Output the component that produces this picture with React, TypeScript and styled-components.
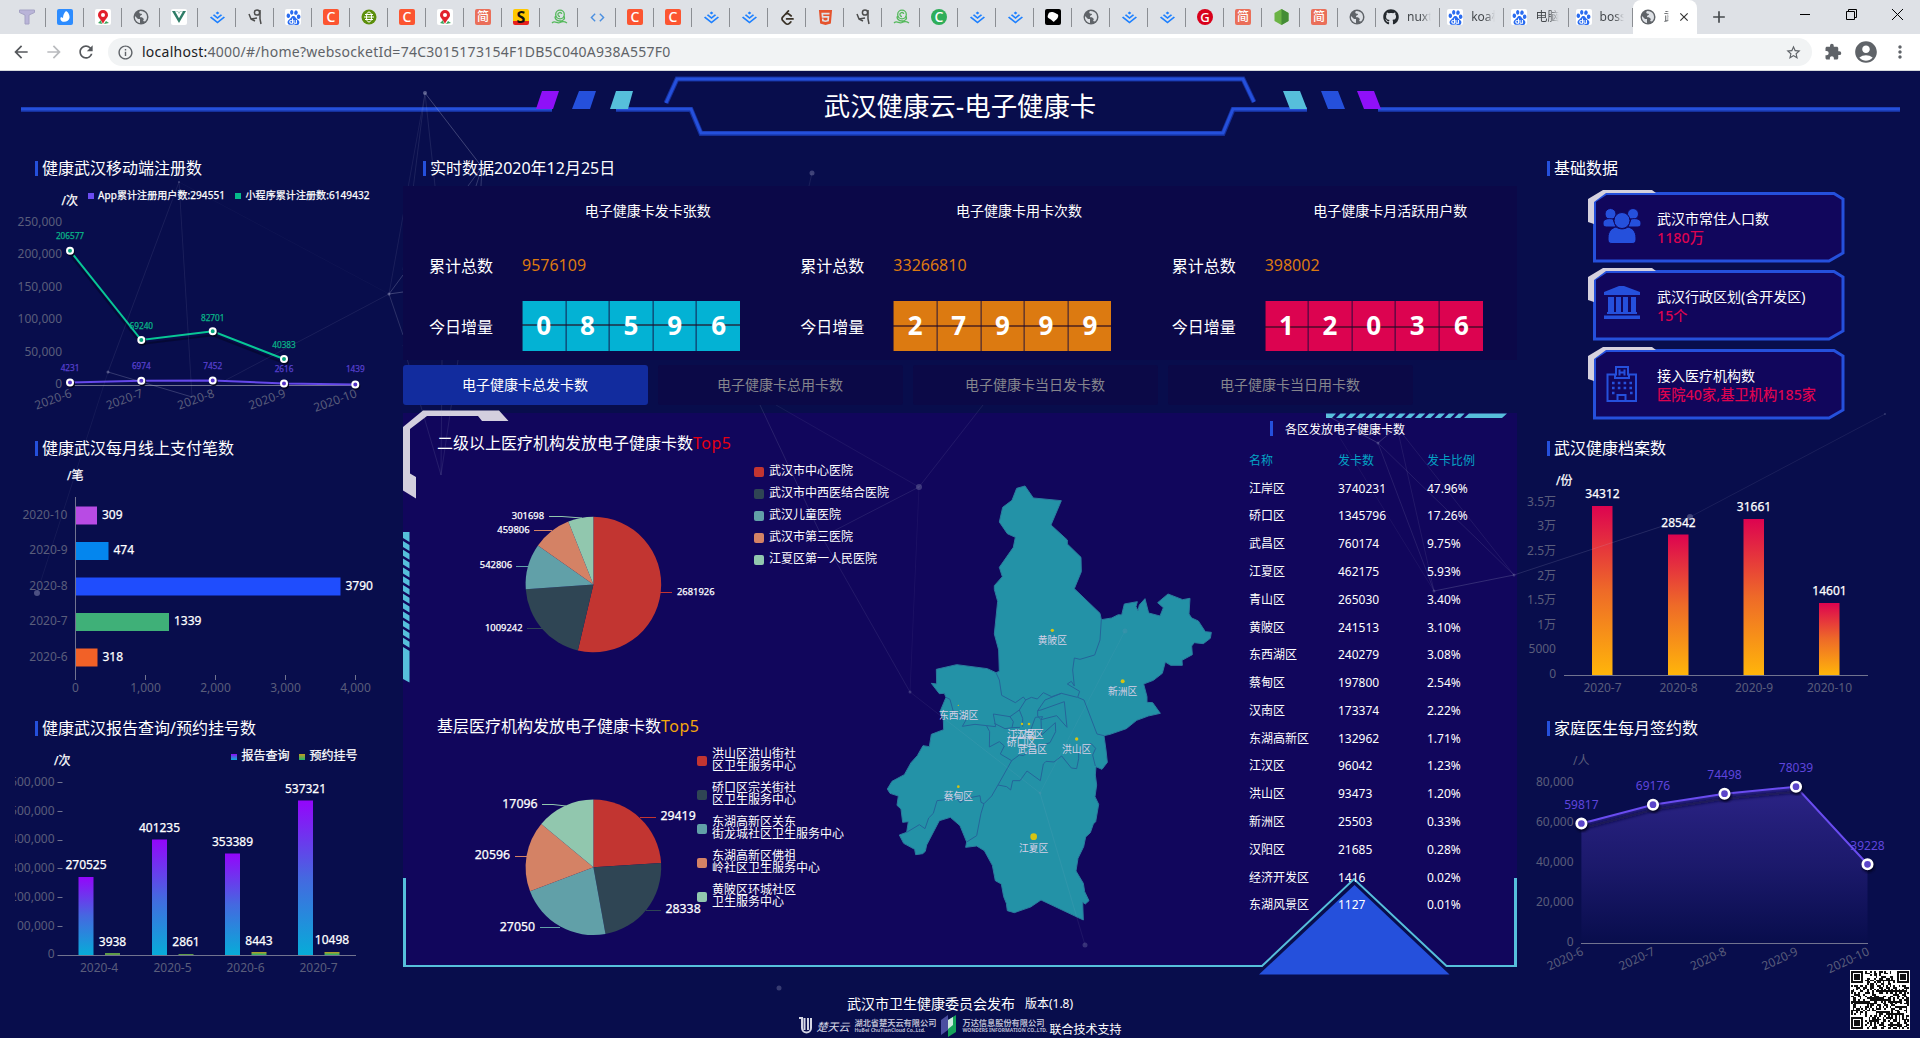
import React from "react";
import styled, { createGlobalStyle } from "styled-components";
import { SiBaidu, SiJuejin, SiLeetcode, SiVuedotjs, SiHtml5 } from "react-icons/si";
import { FaGithub } from "react-icons/fa";
import {
  MdArrowBack,
  MdArrowForward,
  MdRefresh,
  MdInfoOutline,
  MdStarBorder,
  MdExtension,
  MdAccountCircle,
  MdMoreVert,
  MdAdd,
  MdClose,
  MdCode,
} from "react-icons/md";

const FONT = `"Noto Sans", "Noto Sans CJK SC", sans-serif`;
const BG = "#080d4c";
const BLUE = "#2550dc";
const CYAN = "#56bfdb";
const DIM = "#5a5d7b";
const PINK = "#dc0350";

const Global = createGlobalStyle`
  * { box-sizing: border-box; }
  body { margin: 0; background: ${BG}; font-family: ${FONT}; color: #fff; overflow: hidden; }
  svg { display: block; }
`;

const Window = styled.div`
  width: 1920px;
  height: 1038px;
  display: flex;
  flex-direction: column;
  overflow: hidden;
`;

/* ---------- browser chrome ---------- */

const TabStrip = styled.div`
  height: 34px;
  flex: none;
  display: flex;
  align-items: stretch;
  padding-left: 8px;
  background: #dee1e6;
  color: #45494d;
`;

const Tab = styled.div<{ $wide?: boolean; $active?: boolean }>`
  width: ${(p) => (p.$wide ? 64.2 : 38)}px;
  flex: none;
  display: flex;
  align-items: center;
  justify-content: ${(p) => (p.$wide ? "flex-start" : "center")};
  padding-left: ${(p) => (p.$wide ? 7 : 0)}px;
  background-color: ${(p) => (p.$active ? "#fff" : "transparent")};
  background-image: ${(p) => (p.$active ? "none" : "linear-gradient(#8b8e93, #8b8e93)")};
  background-repeat: no-repeat;
  background-size: 1px 19px;
  background-position: right 8px;
  border-radius: ${(p) => (p.$active ? "8px 8px 0 0" : "0")};
  gap: 8px;
`;

const TabLabel = styled.span<{ $w: number }>`
  width: ${(p) => p.$w}px;
  overflow: hidden;
  white-space: nowrap;
  font-size: 12px;
  line-height: 18px;
  mask-image: linear-gradient(90deg, #000 60%, transparent);
`;

const Badge = styled.span<{ $bg: string; $fg?: string; $round?: boolean; $size?: number }>`
  width: 16px;
  height: 16px;
  display: grid;
  place-items: center;
  border-radius: ${(p) => (p.$round ? "50%" : "2px")};
  background: ${(p) => p.$bg};
  color: ${(p) => p.$fg || "#fff"};
  font-size: ${(p) => p.$size || 14}px;
  line-height: 16px;
  font-weight: 500;
`;

const NewTab = styled.div`
  width: 44px;
  display: grid;
  place-items: center;
`;

const WinControls = styled.div`
  margin-left: auto;
  display: flex;
  color: #111;
`;

const WinButton = styled.div`
  width: 46px;
  height: 28px;
  display: grid;
  place-items: center;
`;

const Toolbar = styled.div`
  height: 37px;
  flex: none;
  display: flex;
  align-items: center;
  padding: 0 11px;
  background: #fff;
  border-bottom: 1px solid #d5d8dc;
  color: #5f6368;
`;

const NavIcon = styled.span<{ $w: number; $faded?: boolean }>`
  width: ${(p) => p.$w}px;
  display: flex;
  color: ${(p) => (p.$faded ? "#b9bbbe" : "#55585c")};
`;

const Omnibox = styled.div`
  flex: none;
  width: 1704px;
  height: 28px;
  display: flex;
  align-items: center;
  padding: 0 10px 0 9px;
  border-radius: 14px;
  background: #f1f3f4;
`;

const Url = styled.span`
  flex: 1;
  margin-left: 8px;
  font-size: 14px;
  line-height: 20px;
  letter-spacing: 0.26px;
  b {
    font-weight: 400;
    color: #202124;
  }
`;

const Tools = styled.div`
  flex: 1;
  display: flex;
  align-items: center;
  justify-content: space-between;
  padding-left: 12px;
  margin-right: -1px;
`;

/* ---------- dashboard ---------- */

const Dashboard = styled.div`
  position: relative;
  flex: 1;
  display: flex;
  flex-direction: column;
  background: ${BG};
`;

const Backdrop = styled.svg`
  position: absolute;
  left: 0;
  top: 0;
  z-index: 1;
  pointer-events: none;
`;

const Header = styled.header`
  position: relative;
  height: 70px;
  flex: none;
  display: flex;
  justify-content: center;
`;

const HeaderArt = styled.svg`
  position: absolute;
  left: 0;
  top: 0;
`;

const HeaderTitle = styled.h1`
  position: relative;
  margin: 0;
  font-size: 26.4px;
  line-height: 71px;
  font-weight: 400;
`;

const Main = styled.main`
  height: 841px;
  flex: none;
  display: grid;
  grid-template-columns: 403px 1114px 403px;
`;

const Column = styled.div`
  display: flex;
  flex-direction: column;
  min-width: 0;
`;

const Section = styled.section`
  height: 280px;
  flex: none;
  display: flex;
  flex-direction: column;
`;

const SectionTitle = styled.h2<{ $left: number; $h?: number }>`
  height: ${(p) => p.$h || 42}px;
  flex: none;
  margin: 0;
  padding: 20px 0 0 ${(p) => p.$left}px;
  display: flex;
  gap: 4px;
  font-size: 16px;
  line-height: 14px;
  font-weight: 400;
  white-space: nowrap;
  &::before {
    content: "";
    width: 3px;
    height: 15px;
    background: ${BLUE};
  }
`;

const Chart = styled.svg`
  flex: none;
  overflow: visible;
  font-family: ${FONT};
`;

const Label = styled.text<{ $c?: string; $s?: number; $heavy?: boolean }>`
  font-size: ${(p) => p.$s || 12}px;
  fill: ${(p) => p.$c || DIM};
  stroke: ${(p) => (p.$heavy ? p.$c || "#fff" : "none")};
  stroke-width: 0.25px;
`;

const StatsPanel = styled.div`
  position: relative;
  z-index: 2;
  height: 174px;
  flex: none;
  display: grid;
  grid-template-columns: repeat(3, 1fr);
  background: #0b0848;
`;

const Stat = styled.div`
  display: grid;
  grid-template-columns: 93px 1fr;
  grid-template-rows: 49px 59px 64px;
  align-items: center;
  padding-left: 26px;
  font-size: 16px;
`;

const StatTitle = styled.div`
  grid-column: 1 / 3;
  padding-left: 92px;
  text-align: center;
  font-size: 14px;
  line-height: 20px;
`;

const StatValue = styled.div`
  color: #dd7a10;
`;

const Digits = styled.div<{ $bg: string; $line: number }>`
  width: 218px;
  height: 50px;
  display: grid;
  grid-template-columns: repeat(5, 1fr);
  background: linear-gradient(rgba(40, 10, 30, 0.6), rgba(40, 10, 30, 0.6)) 0 ${(p) => p.$line}px / 100% 2px no-repeat,
    ${(p) => p.$bg};
  font-size: 26px;
  font-weight: 700;
  line-height: 48px;
  text-align: center;
`;

const Digit = styled.span`
  border-left: 1px solid rgba(20, 10, 60, 0.55);
  &:not(:last-child) {
    border-right: 1px solid rgba(20, 10, 60, 0.35);
  }
`;

const Switcher = styled.div`
  position: relative;
  z-index: 2;
  flex: none;
  height: 40px;
  margin: 5px 0 8px;
  display: flex;
  gap: 10px;
`;

const SwitchButton = styled.button<{ $active?: boolean }>`
  width: 245px;
  height: 40px;
  padding: 0 1px 0 0;
  border: 0;
  border-radius: 3px;
  font: 14px/40px ${FONT};
  color: ${(p) => (p.$active ? "#fff" : "#85858c")};
  background: ${(p) => (p.$active ? "#122c9e" : "#0b0947")};
`;

const Panel = styled.div`
  position: relative;
  flex: none;
  height: 553px;
  display: grid;
  grid-template-columns: 490px 347px 277px;
  background: #11065c;
`;

const PanelArt = styled.svg`
  position: absolute;
  left: 0;
  top: 0;
  overflow: visible;
`;

const PieColumn = styled.div`
  position: relative;
  display: grid;
  grid-template-rows: 283px 270px;
`;

const PieBlock = styled.div`
  padding-top: 20px;
`;

const PieTitle = styled.h3<{ $accent: string }>`
  margin: 0 0 1px;
  padding-left: 34px;
  font-size: 16px;
  line-height: 20px;
  font-weight: 400;
  em {
    font-style: normal;
    letter-spacing: 0.5px;
    color: ${(p) => p.$accent};
  }
`;

const PieRow = styled.div`
  display: flex;
`;

const Legend = styled.ul`
  list-style: none;
  margin: 0;
  padding: 6px 0 0;
`;

const LegendItem = styled.li<{ $h: number; $c: string }>`
  height: ${(p) => p.$h}px;
  display: flex;
  align-items: center;
  gap: 5px;
  font-size: 12px;
  line-height: 12px;
  white-space: pre;
  &::before {
    content: "";
    width: 10px;
    height: 10px;
    margin-top: 1px;
    border-radius: 2px;
    background: ${(p) => p.$c};
  }
`;

const MapColumn = styled.div`
  position: relative;
`;

const TableColumn = styled.div`
  position: relative;
  padding-left: 9px;
`;

const TableTitle = styled.h3`
  margin: 0;
  height: 34px;
  padding: 8px 0 0 21px;
  display: flex;
  gap: 12px;
  font-size: 12px;
  line-height: 17px;
  font-weight: 400;
  &::before {
    content: "";
    width: 3px;
    height: 15px;
    background: ${BLUE};
  }
`;

const TableRow = styled.div<{ $head?: boolean }>`
  height: 27.79px;
  display: grid;
  grid-template-columns: 89px 89px 1fr;
  align-items: center;
  font-size: 12px;
  line-height: 18px;
  color: ${(p) => (p.$head ? "#04a3c4" : "#fff")};
`;

const CardList = styled.div`
  display: flex;
  flex-direction: column;
  padding: 6px 0 0 70px;
`;

const Card = styled.div`
  position: relative;
  width: 258px;
  height: 78.3px;
  display: grid;
  grid-template-columns: 70px 1fr;
`;

const CardFrame = styled.svg`
  position: absolute;
  left: 0;
  top: 0;
  overflow: visible;
`;

const CardIcon = styled.div`
  position: relative;
  padding: 19px 0 0 16px;
`;

const CardText = styled.div`
  position: relative;
  padding-top: 20px;
  font-size: 14px;
  line-height: 19px;
  white-space: nowrap;
  strong {
    display: block;
    font-size: 14.3px;
    font-weight: 500;
    color: ${PINK};
  }
`;

const Footer = styled.footer`
  position: relative;
  flex: 1;
  display: flex;
  flex-direction: column;
  align-items: center;
  padding-top: 13px;
`;

const Publisher = styled.div`
  display: flex;
  align-items: center;
  gap: 10px;
  font-size: 14px;
  line-height: 18px;
  small {
    font-size: 12px;
  }
`;

const Partners = styled.div`
  display: flex;
  align-items: center;
  height: 25px;
  font-size: 12px;
`;

const Company = styled.div<{ $w: number }>`
  width: ${(p) => p.$w}px;
  font-size: 8.2px;
  line-height: 9px;
  font-weight: 700;
  color: #b9bbd0;
  white-space: nowrap;
  small {
    display: block;
    font-size: 5px;
    line-height: 6px;
  }
`;

const Script = styled.span`
  width: 38px;
  font: italic 11px/16px "Noto Sans CJK SC", sans-serif;
  color: #d5d6e4;
`;

const Support = styled.span`
  padding-top: 8px;
  line-height: 16px;
`;

const QrCode = styled.svg`
  position: absolute;
  right: 10px;
  bottom: 8px;
`;

/* ---------- favicons ---------- */

const Globe = () => (
  <svg width="16" height="16" viewBox="0 0 16 16">
    <circle cx="8" cy="8" r="7.500" fill="#5f6368" />
    <path d="M2 7l3 3h2v4c-3-.5-5.500-3-5-7zM7 2c-1 1-1 2 0 2.500s2 0 2 1-2 .5-2 2 2 .5 3 1.500 1 1.500 0 3l2 .5c2-2 2.500-4 1.500-7-1-2-3-3.500-6.500-3.500z" fill="#dee1e6" />
  </svg>
);
const Juejin = () => <SiJuejin size={15} color="#1e80ff" />;
const Baidu = () => (
  <Badge $bg="#fff" $fg="#2a6cf0">
    <SiBaidu size={15} />
  </Badge>
);
const RedC = () => <Badge $bg="#fc5531">C</Badge>;
const Jian = () => (
  <Badge $bg="#ea6f5a" $size={12}>
    简
  </Badge>
);
const Pin = () => (
  <Badge $bg="#fff">
    <svg width="14" height="16" viewBox="0 0 14 16">
      <path d="M7 1a5 5 0 0 1 5 5c0 3-3 4-5 9C5 10 2 9 2 6a5 5 0 0 1 5-5z" fill="#e2202c" />
      <circle cx="7" cy="6" r="2" fill="#fff" />
      <path d="M2 14l3-3 1 4zM8 15l2-3 3 2z" fill="#3ba55d" />
    </svg>
  </Badge>
);
const Snail = () => (
  <svg width="17" height="16" viewBox="0 0 17 16" fill="none" stroke="#55b95c" strokeWidth="1.3">
    <circle cx="9" cy="5.500" r="4.300" />
    <path d="M9 7.500a2 2 0 1 1 1.800-2.600M4.800 7c-2 2 1 5 4 5s6-2 4-5M1 14c3-3 5 1 8-.5 2-1 4-1.500 7 .5" />
  </svg>
);
const Figure = () => (
  <svg width="14" height="16" viewBox="0 0 14 16" fill="none" stroke="#4c4c4c" strokeWidth="1.5">
    <circle cx="9" cy="3.500" r="2.600" />
    <path d="M1 5l2 5 6-1M12 1v9l1 5M3 10l4 2" />
  </svg>
);
const Tee = () => (
  <svg width="16" height="16" viewBox="0 0 16 16" fill="#b9b4d8" stroke="#a5a2c4">
    <path d="M.5 1h15v2.500l-5.500 2.500v9H6V6L.5 3.500z" />
  </svg>
);
const Swoosh = () => (
  <Badge $bg="#2d8cff">
    <svg width="16" height="16" viewBox="0 0 16 16">
      <path d="M9 2c2 1 4 4 3.500 7-.5 3-4 4.500-7.500 3.500C3 11 3 9 4 8l2 1c0-3 1-5 3-7z" fill="#fff" />
    </svg>
  </Badge>
);
const GreenGlobe = () => (
  <svg width="16" height="16" viewBox="0 0 16 16" fill="none" stroke="#fff">
    <circle cx="8" cy="8" r="7.500" fill="#5c8f0b" stroke="none" />
    <ellipse cx="8" cy="8" rx="2.500" ry="5" />
    <path d="M3 8h10M4 5.500h8M4 10.500h8" />
  </svg>
);
const SMark = () => (
  <Badge $bg="linear-gradient(#ffc800 75%, #e8201c 75%)" $fg="#111" $size={16}>
    <b>S</b>
  </Badge>
);
const Blob = () => (
  <Badge $bg="#000">
    <svg width="16" height="16" viewBox="0 0 16 16">
      <path d="M3 6c1-4 5-3 7-2s4 1 3 4-3 3-4 5c-2-1-2-2-4-3s-3-2-2-4z" fill="#fff" />
    </svg>
  </Badge>
);
const NodeMark = () => (
  <svg width="15" height="16" viewBox="0 0 15 16">
    <path d="M7.500 0l7 4v8l-7 4-7-4V4z" fill="#6bb345" />
    <path d="M7.500 0l7 4v8l-7 4z" fill="#448c36" />
  </svg>
);

const smallTabs: React.ReactNode[] = [
  <Tee />, <Swoosh />, <Pin />, <Globe />,
  <Badge $bg="#fff"><SiVuedotjs size={14} color="#2f7d68" /></Badge>,
  <Juejin />, <Figure />, <Baidu />, <RedC />, <GreenGlobe />, <RedC />, <Pin />, <Jian />, <SMark />, <Snail />,
  <MdCode size={17} color="#4b8fe0" />,
  <RedC />, <RedC />, <Juejin />, <Juejin />,
  <SiLeetcode size={15} color="#3a3227" />,
  <SiHtml5 size={15} color="#e5532d" />,
  <Figure />, <Snail />,
  <Badge $bg="#2fae5a" $round>C</Badge>,
  <Juejin />, <Juejin />, <Blob />, <Globe />, <Juejin />, <Juejin />,
  <Badge $bg="#d9001b" $round $size={13}>G</Badge>,
  <Jian />,
  <NodeMark />,
  <Jian />, <Globe />,
];

function BrowserChrome() {
  return (
    <>
      <TabStrip>
        {smallTabs.map((icon, i) => (
          <Tab key={i}>{icon}</Tab>
        ))}
        <Tab $wide><FaGithub size={16} color="#24292e" /><TabLabel $w={24}>nuxt.</TabLabel></Tab>
        <Tab $wide><Baidu /><TabLabel $w={24}>koa框</TabLabel></Tab>
        <Tab $wide><Baidu /><TabLabel $w={24}>电脑截</TabLabel></Tab>
        <Tab $wide><Baidu /><TabLabel $w={24}>boss直</TabLabel></Tab>
        <Tab $wide $active>
          <Globe />
          <TabLabel $w={5}>武</TabLabel>
          <MdClose size={14} color="#333" />
        </Tab>
        <NewTab><MdAdd size={20} /></NewTab>
        <WinControls>
          <WinButton><svg width="10" height="10"><path d="M0 5.500h10" stroke="#000" /></svg></WinButton>
          <WinButton>
            <svg width="11" height="11" fill="none" stroke="#000"><path d="M.5 2.500h8v8h-8zM2.500 2.500v-2h8v8h-2" /></svg>
          </WinButton>
          <WinButton><svg width="11" height="11"><path d="M0 0l11 11M11 0L0 11" stroke="#000" /></svg></WinButton>
        </WinControls>
      </TabStrip>
      <Toolbar>
        <NavIcon $w={33}><MdArrowBack size={20} /></NavIcon>
        <NavIcon $w={32} $faded><MdArrowForward size={20} /></NavIcon>
        <NavIcon $w={32}><MdRefresh size={20} /></NavIcon>
        <Omnibox>
          <MdInfoOutline size={17} />
          <Url><b>localhost:</b>4000/#/home?websocketId=74C3015173154F1DB5C040A938A557F0</Url>
          <MdStarBorder size={17} />
        </Omnibox>
        <Tools>
          <MdExtension size={18} />
          <MdAccountCircle size={26} />
          <MdMoreVert size={20} />
        </Tools>
      </Toolbar>
    </>
  );
}

/* ---------- backdrop ---------- */

const segments: [number, number, number, number, number][] = [
  [179, 182, 108, 372, 0.1], [179, 182, 192, 397, 0.1], [179, 182, 389, 294, 0.04], [389, 294, 226, 380, 0.1],
  [108, 372, 192, 397, 0.25], [389, 294, 425, 93, 0.1], [389, 294, 403, 275, 0.25], [389, 294, 403, 292, 0.3],
  [389, 294, 403, 335, 0.2], [108, 372, 37, 593, 0.07], [425, 93, 482, 167, 0.3], [425, 93, 403, 270, 0.12],
  [425, 93, 435, 186, 0.12], [482, 167, 468, 186, 0.25], [482, 167, 476, 186, 0.25], [482, 167, 481, 186, 0.25],
  [812, 173, 809, 186, 0.1], [403, 345, 441, 475, 0.12], [442, 360, 441, 475, 0.12], [458, 360, 441, 475, 0.12],
  [760, 405, 822, 537, 0.14], [776, 405, 919, 487, 0.08], [983, 405, 919, 487, 0.1], [919, 487, 822, 537, 0.12],
  [919, 487, 910, 692, 0.06], [822, 537, 910, 692, 0.1], [910, 692, 1040, 793, 0.08], [1040, 793, 1125, 631, 0.06],
  [1040, 793, 1085, 945, 0.08], [1326, 415, 1378, 443, 0.22], [1378, 443, 1397, 427, 0.22],
  [1378, 443, 1434, 591, 0.13], [1378, 443, 1514, 575, 0.13], [1434, 591, 1514, 575, 0.2],
  [1326, 415, 1434, 591, 0.07], [1397, 427, 1434, 591, 0.1], [1397, 427, 1514, 575, 0.1],
  [1514, 575, 1690, 517, 0.16], [1690, 517, 1885, 414, 0.1],
];
const dots: [number, number, number, number][] = [
  [425, 93, 2, 0.6], [179, 182, 1, 0.4], [389, 294, 1.5, 0.5], [108, 372, 1.5, 0.5], [37, 593, 3, 0.5],
  [812, 173, 2.5, 0.4], [919, 487, 3, 0.35], [910, 692, 1.5, 0.3], [1040, 793, 1.500, 0.15], [1125, 631, 2.5, 0.15],
  [1085, 945, 2.5, 0.3], [1378, 443, 1.5, 0.3], [1434, 591, 1.5, 0.3], [1514, 575, 1.5, 0.3], [1690, 517, 3, 0.4],
  [1885, 414, 1, 0.3], [779, 988, 2.5, 0.35],
];

function Particles() {
  return (
    <Backdrop width="1920" height="967" viewBox="0 71 1920 967">
      {segments.map(([a, b, c, d, o], i) => (
        <line key={i} x1={a} y1={b} x2={c} y2={d} stroke="#b9bcd8" strokeOpacity={o} />
      ))}
      {dots.map(([x, y, r, o], i) => (
        <circle key={i} cx={x} cy={y} r={r} fill="#8f92b8" fillOpacity={o} />
      ))}
    </Backdrop>
  );
}

function TopBanner() {
  return (
    <Header>
      <HeaderArt width="1920" height="70" viewBox="0 71 1920 70">
        <g fill="none" stroke="#16309b" strokeWidth="5">
          <path d="M21 109.500H552M616 109.500H691L701 133.500H1223L1233 109.500H1307M1378 109.500H1900" />
          <path d="M666 103L677 79H1243L1254 102" />
        </g>
        <g fill="none" stroke={BLUE} strokeWidth="3">
          <path d="M21 109H552M616 109H691L701 133H1223L1233 109H1307M1378 109H1900" />
          <path d="M666 103L677 79H1243L1254 102" />
        </g>
        <path d="M542 91h17l-6 18h-17z M1357 91h17l7 18h-17z" fill="#8f10f8" />
        <path d="M579 91h17l-6 18h-18z M1321 91h17l7 18h-17z" fill={BLUE} />
        <path d="M616 91h17l-5 18h-18z M1283 91h17l7 18h-17z" fill={CYAN} />
      </HeaderArt>
      <HeaderTitle>武汉健康云-电子健康卡</HeaderTitle>
    </Header>
  );
}

/* ---------- left charts ---------- */

const monthX = [70, 141.3, 212.7, 284, 355.3];

function RegistrationChart() {
  const green = [250.7, 340, 331.3, 359];
  const purple = [382.5, 380.7, 380.5, 383.5, 384.5];
  const ticks: [string, number][] = [["250,000", 221.5], ["200,000", 254], ["150,000", 286.5], ["100,000", 319], ["50,000", 351.5], ["0", 384]];
  return (
    <Chart width="403" height="238" viewBox="0 183 403 238">
      <rect x="88" y="193" width="6" height="6" fill="#6b4cf0" />
      <Label x="98" y="195" dy=".36em" $s={10} $c="#fff" $heavy textLength="127">App累计注册用户数:294551</Label>
      <rect x="235" y="193" width="6" height="6" fill="#05b98a" />
      <Label x="245.500" y="195" dy=".36em" $s={10} $c="#fff" $heavy textLength="124">小程序累计注册数:6149432</Label>
      <Label x="61.500" y="200.500" dy=".36em" $c="#fff" $heavy>/次</Label>
      {ticks.map(([t, y]) => (
        <Label key={t} x="62" y={y} dy=".36em" textAnchor="end">{t}</Label>
      ))}
      <path d="M70 385.500H356" stroke="#71738f" />
      <path d={`M${green.map((y, i) => `${monthX[i]} ${y + 4}`).join("L")}`} fill="none" stroke="#04072c" strokeOpacity=".7" strokeWidth="2" />
      <path d={`M${green.map((y, i) => `${monthX[i]} ${y}`).join("L")}`} fill="none" stroke="#08c795" strokeWidth="2" />
      <path d={`M${purple.map((y, i) => `${monthX[i]} ${y}`).join("L")}`} fill="none" stroke="#6548ea" strokeWidth="2" />
      {green.map((y, i) => (
        <g key={i}>
          <circle cx={monthX[i] + 1} cy={y + 1.5} r="4" fill="#03051f" />
          <circle cx={monthX[i]} cy={y} r="3" fill="#07a37c" stroke="#fff" strokeWidth="2" />
          <Label x={monthX[i]} y={[236.5, 326, 318, 345][i]} dy=".36em" textAnchor="middle" $s={8.2} $c="#08b387" $heavy>
            {["206577", "69240", "82701", "40383"][i]}
          </Label>
        </g>
      ))}
      {purple.map((y, i) => (
        <g key={i}>
          <circle cx={monthX[i] + 1} cy={y + 1.5} r="4" fill="#03051f" />
          <circle cx={monthX[i]} cy={y} r="3" fill="#5434c8" stroke="#fff" strokeWidth="2" />
          <Label x={monthX[i]} y={[368.5, 366.5, 366.5, 369.5, 369.5][i]} dy=".36em" textAnchor="middle" $s={8.2} $c="#5740cc" $heavy>
            {["4231", "6974", "7452", "2616", "1439"][i]}
          </Label>
          <Label transform={`translate(${monthX[i] + 1} 392.500) rotate(-20)`} dy=".36em" textAnchor="end">
            {`2020-${i + 6}`}
          </Label>
        </g>
      ))}
    </Chart>
  );
}

const payments = [
  { m: "2020-10", v: "309", w: 21, y: 506.5, c: "#b84be4" },
  { m: "2020-9", v: "474", w: 32.5, y: 542, c: "#0486ee" },
  { m: "2020-8", v: "3790", w: 264.5, y: 577.5, c: "#1f4dfd" },
  { m: "2020-7", v: "1339", w: 93, y: 613, c: "#3fb078" },
  { m: "2020-6", v: "318", w: 21.5, y: 648.5, c: "#f26127" },
];

function PaymentChart() {
  return (
    <Chart width="403" height="238" viewBox="0 463 403 238">
      <Label x="67" y="475.500" dy=".36em" $c="#fff" $heavy>/笔</Label>
      {payments.map((p) => (
        <g key={p.m}>
          <rect x="76" y={p.y} width={p.w} height="18" fill={p.c} />
          <Label x="67.500" y={p.y + 8} dy=".36em" textAnchor="end">{p.m}</Label>
          <Label x={76 + p.w + 5} y={p.y + 8} dy=".36em" $c="#fff" $heavy>{p.v}</Label>
        </g>
      ))}
      <path d="M75.500 497V680M145.500 675v5M215.500 675v5M285.500 675v5M355.500 675v5" stroke="#71738f" />
      {["0", "1,000", "2,000", "3,000", "4,000"].map((t, i) => (
        <Label key={t} x={75.5 + i * 70} y="687.500" dy=".36em" textAnchor="middle">{t}</Label>
      ))}
    </Chart>
  );
}

const visits = [
  { m: "2020-4", a: "270525", b: "3938", x: 78.5, top: 877, bt: 953, ly: 941.5 },
  { m: "2020-5", a: "401235", b: "2861", x: 152, top: 839.5, bt: 954, ly: 941.5 },
  { m: "2020-6", a: "353389", b: "8443", x: 225, top: 853.5, bt: 952, ly: 940.5 },
  { m: "2020-7", a: "537321", b: "10498", x: 298, top: 800.5, bt: 952, ly: 939.5 },
];

function VisitChart() {
  return (
    <Chart width="403" height="238" viewBox="0 743 403 238">
      <defs>
        <linearGradient id="visitA" x1="0" y1="0" x2="0" y2="1">
          <stop offset="0" stopColor="#9406fb" /><stop offset=".5" stopColor="#4568e0" /><stop offset="1" stopColor="#07acd8" />
        </linearGradient>
        <linearGradient id="visitB" x1="0" y1="0" x2="0" y2="1">
          <stop offset="0" stopColor="#c39a20" /><stop offset="1" stopColor="#21b36e" />
        </linearGradient>
        <clipPath id="axisClip"><rect x="15" y="743" width="60" height="238" /></clipPath>
      </defs>
      <Label x="54" y="760.500" dy=".36em" $c="#fff" $heavy>/次</Label>
      <rect x="231" y="754" width="6" height="6" fill="url(#visitA)" />
      <Label x="241.500" y="755.500" dy=".36em" $c="#fff" $heavy>报告查询</Label>
      <rect x="299" y="754" width="6" height="6" fill="url(#visitB)" />
      <Label x="309.500" y="755.500" dy=".36em" $c="#fff" $heavy>预约挂号</Label>
      <g clipPath="url(#axisClip)">
        {["600,000", "500,000", "400,000", "300,000", "200,000", "100,000", "0"].map((t, i) => (
          <Label key={t} x="54.500" y={781.7 + i * 28.7} dy=".36em" textAnchor="end">{t}</Label>
        ))}
      </g>
      {[0, 1, 2, 3, 4, 5].map((i) => (
        <path key={i} d={`M57.500 ${Math.round(782 + i * 28.8) + 0.5}h5`} stroke="#71738f" />
      ))}
      {visits.map((v) => (
        <g key={v.m}>
          <rect x={v.x} y={v.top} width="15" height={955 - v.top} fill="url(#visitA)" />
          <rect x={v.x + 26.5} y={v.bt} width="15" height={955 - v.bt} fill={v.bt > 952 ? "#5f9c48" : "url(#visitB)"} />
          <Label x={v.x + 7.5} y={v.top - 12} dy=".36em" textAnchor="middle" $c="#fff" $heavy>{v.a}</Label>
          <Label x={v.x + 34} y={v.ly} dy=".36em" textAnchor="middle" $c="#fff" $heavy>{v.b}</Label>
          <Label x={v.x + 20.5} y="967.500" dy=".36em" textAnchor="middle">{v.m}</Label>
        </g>
      ))}
      <path d="M57.500 955.500H356" stroke="#71738f" />
    </Chart>
  );
}

/* ---------- right charts ---------- */

const archives = [
  { m: "2020-7", v: "34312", x: 1592, top: 506 },
  { m: "2020-8", v: "28542", x: 1668, top: 534.5 },
  { m: "2020-9", v: "31661", x: 1743.5, top: 519 },
  { m: "2020-10", v: "14601", x: 1819, top: 603 },
];

function ArchiveChart() {
  return (
    <Chart width="403" height="238" viewBox="1517 463 403 238">
      <defs>
        <linearGradient id="archive" x1="0" y1="0" x2="0" y2="1">
          <stop offset="0" stopColor="#dd0350" /><stop offset=".5" stopColor="#ee6a28" /><stop offset="1" stopColor="#ffb50a" />
        </linearGradient>
      </defs>
      <Label x="1556" y="480.500" dy=".36em" $c="#fff" $heavy>/份</Label>
      {["3.5万", "3万", "2.5万", "2万", "1.5万", "1万", "5000", "0"].map((t, i) => (
        <Label key={t} x="1556" y={501.5 + i * 24.6} dy=".36em" textAnchor="end">{t}</Label>
      ))}
      {archives.map((a) => (
        <g key={a.m}>
          <rect x={a.x} y={a.top} width="20.500" height={675 - a.top} fill="url(#archive)" />
          <Label x={a.x + 10.5} y={a.top - 12} dy=".36em" textAnchor="middle" $c="#fff" $heavy>{a.v}</Label>
          <Label x={a.x + 10.5} y="687.500" dy=".36em" textAnchor="middle">{a.m}</Label>
        </g>
      ))}
      <path d="M1564 675.500H1868" stroke="#71738f" />
    </Chart>
  );
}

function ContractChart() {
  const xs = [1581.4, 1653, 1724.5, 1796, 1867.5];
  const ys = [823.5, 804.7, 793.7, 786.7, 864.3];
  const line = ys.map((y, i) => `${xs[i]} ${y}`).join("L");
  const shade = ys.slice(0, 4).map((y, i) => `${xs[i]} ${y + 5}`).join("L");
  return (
    <Chart width="403" height="238" viewBox="1517 743 403 238">
      <defs>
        <linearGradient id="contract" x1="0" y1="0" x2="0" y2="1">
          <stop offset="0" stopColor="#6b4cf0" stopOpacity=".36" /><stop offset=".5" stopColor="#5a40d0" stopOpacity=".24" /><stop offset="1" stopColor="#5a40d0" stopOpacity="0" />
        </linearGradient>
        <filter id="soft"><feGaussianBlur stdDeviation="1.500" /></filter>
      </defs>
      <Label x="1573" y="760.500" dy=".36em">/人</Label>
      {["80,000", "60,000", "40,000", "20,000", "0"].map((t, i) => (
        <Label key={t} x="1573.500" y={781.7 + i * 40} dy=".36em" textAnchor="end">{t}</Label>
      ))}
      <path d={`M${line}V943H1581.400Z`} fill="url(#contract)" />
      <path d={`M${shade}`} fill="none" stroke="#0a0a3c" strokeOpacity=".8" strokeWidth="3" filter="url(#soft)" />
      <path d={`M${line}`} fill="none" stroke="#6a4cf0" strokeWidth="2" />
      <path d="M1581 943.500H1868" stroke="#71738f" />
      {xs.map((x, i) => (
        <g key={x}>
          <circle cx={x + 1} cy={ys[i] + 2} r="6" fill="#03051f" filter="url(#soft)" />
          <circle cx={x} cy={ys[i]} r="4.700" fill="#5b45c9" stroke="#fff" strokeWidth="2.700" />
          <Label x={x} y={[805, 786, 774.5, 768, 846][i]} dy=".36em" textAnchor="middle" $c="#5f45dd">
            {["59817", "69176", "74498", "78039", "39228"][i]}
          </Label>
          <Label transform={`translate(${x + 1} 950.500) rotate(-25)`} dy=".36em" textAnchor="end">{`2020-${i + 6}`}</Label>
        </g>
      ))}
    </Chart>
  );
}

/* ---------- info cards ---------- */

const PeopleIcon = () => (
  <svg width="38" height="36" viewBox="0 0 38 36" fill={BLUE} stroke="#11065c" strokeWidth="1">
    <circle cx="7.500" cy="6" r="5.500" /><circle cx="30" cy="6" r="5.500" />
    <path d="M0 15c0-4 5-5 10-4l3 8H5c-4 0-5-1-5-4zM38 15c0-4-5-5-10-4l-3 8h8c4 0 5-1 5-4z" />
    <circle cx="19" cy="12.500" r="8" />
    <path d="M5 30c0-7 4-10 8-11 4 2.500 8 2.500 12 0 4 1 8 4 8 11 0 4-1 5.500-4 5.500H9c-3 0-4-1.500-4-5.500z" />
  </svg>
);
const BankIcon = () => (
  <svg width="38" height="36" viewBox="0 0 38 36" fill={BLUE}>
    <path d="M1 6L16 0h5l16 6v3H1zM5 11h6v15H5zM13 11h5v15h-5zM20 11h5v15h-5zM28 11h5v15h-5zM4 26h30v2H4zM1 29.500h36V33H1z" />
  </svg>
);
const HospitalIcon = () => (
  <svg width="38" height="38" viewBox="0 0 38 38" fill="none" stroke={BLUE} strokeWidth="2">
    <path d="M11 9.500H4.500v26.500H33V9.500H25V2H13v7.500zM12 9.500v3.500h14v-3.500M16.500 4.500v6M21.500 4.500v6M16.500 7.500h5M14.500 36v-6h8v6" />
    <path d="M9 18h21M9 23h21M9 28h2.500M27 28h3" strokeDasharray="2.600 3.200" strokeWidth="2.400" />
  </svg>
);

function InfoCard({ icon, title, value }: { icon: React.ReactNode; title: string; value: string }) {
  return (
    <Card>
      <CardFrame width="258" height="73" viewBox="1587 190 258 73">
        <path d="M1594.500 202L1606 194.500H1834L1843 200V254L1829 262H1594.500Z" fill="#11065c" stroke={BLUE} strokeWidth="3" />
        <path d="M1588 200L1603 191H1652L1656 194H1606L1594 203V225L1588 223Z" fill="#d5d1de" />
      </CardFrame>
      <CardIcon>{icon}</CardIcon>
      <CardText>{title}<strong>{value}</strong></CardText>
    </Card>
  );
}

/* ---------- centre ---------- */

const PIE = ["#c23531", "#2f4554", "#61a0a8", "#d48265", "#91c7ae"];

function slices(values: number[], cx: number, cy: number, r: number) {
  const total = values.reduce((a, b) => a + b, 0);
  let angle = -Math.PI / 2;
  return values.map((v) => {
    const next = angle + (v / total) * Math.PI * 2;
    const d = `M${cx} ${cy}L${cx + r * Math.cos(angle)} ${cy + r * Math.sin(angle)}A${r} ${r} 0 ${next - angle > Math.PI ? 1 : 0} 1 ${cx + r * Math.cos(next)} ${cy + r * Math.sin(next)}Z`;
    angle = next;
    return d;
  });
}

type Callout = { t: string; x: number; y: number; end?: boolean; line: string };

function Pie({ values, cy, callouts, size, box }: { values: number[]; cy: number; callouts: Callout[]; size: number; box: [number, number, number] }) {
  return (
    <Chart width={box[1]} height={box[2]} viewBox={`403 ${box[0]} ${box[1]} ${box[2]}`}>
      {slices(values, 593.4, cy, 67.8).map((d, i) => (
        <path key={i} d={d} fill={PIE[i]} />
      ))}
      {callouts.map((c, i) => (
        <g key={c.t}>
          <path d={c.line} stroke={PIE[i]} fill="none" />
          <Label x={c.x} y={c.y} dy=".36em" textAnchor={c.end ? "end" : "start"} $s={size} $c="#fff" $heavy>{c.t}</Label>
        </g>
      ))}
    </Chart>
  );
}

const hospitalCallouts: Callout[] = [
  { t: "2681926", x: 677, y: 592, line: "M660 592.500H672" },
  { t: "1009242", x: 522.5, y: 627.5, end: true, line: "M527 628.500H543" },
  { t: "542806", x: 512, y: 565, end: true, line: "M516 566.500H529" },
  { t: "459806", x: 529.5, y: 529.5, end: true, line: "M534 530.500H552" },
  { t: "301698", x: 544, y: 515.5, end: true, line: "M549 516.500H562L582 518" },
];
const clinicCallouts: Callout[] = [
  { t: "29419", x: 660.5, y: 815.5, line: "M640 817.500H656" },
  { t: "28338", x: 665.5, y: 909, line: "M646 910.500H661" },
  { t: "27050", x: 535, y: 927, end: true, line: "M540 927.500H560" },
  { t: "20596", x: 510, y: 855, end: true, line: "M515 856.500H527" },
  { t: "17096", x: 537.5, y: 804, end: true, line: "M542 804.500H553L566 806" },
];

const hospitals = ["武汉市中心医院", "武汉市中西医结合医院", "武汉儿童医院", "武汉市第三医院", "江夏区第一人民医院"];
const clinics = [
  "洪山区洪山街社\n区卫生服务中心",
  "硚口区宗关街社\n区卫生服务中心",
  "东湖高新区关东\n街龙城社区卫生服务中心",
  "东湖高新区佛祖\n岭社区卫生服务中心",
  "黄陂区环城社区\n卫生服务中心",
];

const cityOutline =
  "470,85 495,78 520,114 604,122 573,195 622,240 622,252 663,292 664,335 643,386 720,460 724,479 755,474 775,464 785,465 793,432 832,425 828,440 834,452 838,435 855,416 866,459 900,468 910,443 893,428 924,402 968,419 990,415 987,462 995,474 1015,483 1036,515 1054,517 1051,535 1030,551 1003,548 995,558 997,584 966,601 967,616 932,616 916,606 907,640 880,661 851,672 861,710 861,727 878,728 901,760 865,768 830,781 799,806 750,823 732,827 738,870 742,907 726,928 708,920 706,945 710,975 705,1010 716,1033 707,1085 700,1092 691,1118 677,1131 671,1160 654,1195 648,1233 670,1270 674,1295 687,1322 676,1332 668,1327 670,1380 543,1320 512,1341 463,1358 442,1352 439,1330 431,1310 424,1272 406,1262 397,1216 373,1172 350,1158 317,1162 320,1146 300,1097 271,1072 238,1082 200,1155 196,1174 188,1181 167,1184 164,1168 131,1150 118,1125 140,1117 145,1085 128,1087 123,1047 111,1036 115,1008 90,1000 82,987 96,964 133,944 153,908 172,887 189,857 208,860 214,823 251,809 250,780 240,755 258,712 253,700 238,701 214,670 230,672 229,628 290,614 382,626 408,638 418,634 416,570 403,522 413,424 403,388 403,377 427,350 418,322 460,262 466,232 442,221 418,186 428,142 456,121";

const borders = [
  "408,638 418,660 425,706 466,728 490,711 497,720 514,712 532,717 550,698 575,710 604,700 652,712",
  "724,479 720,540 704,585 660,598 643,594 638,630 643,678 634,664 622,672 659,694 653,712 672,720 711,822 732,827",
  "258,712 270,718 280,755 318,780 307,799 345,793 407,800 400,762 450,770 478,750 497,720",
  "380,798 389,815 388,861 418,845 433,858 421,882 455,902 414,975 395,1008 372,1031 363,1060 350,1127 320,1146",
  "455,902 478,885 490,887 520,865 570,848 587,815 586,788 545,825",
  "414,975 440,980 452,990 458,962 480,962 501,933 541,962 550,912 558,904 582,906 605,888 634,924 650,926 656,896 656,880 693,850 707,865 698,885 706,918",
  "140,1117 178,1094 195,1106 206,1074 220,1060 231,1022 290,1015 300,1028 320,1015 360,1007 363,1027 372,1031",
  "533,752 543,750 613,725 621,802 590,767 543,779 548,770 526,772 512,810",
  "545,825 543,779 533,768 533,752 555,720 604,700",
  "450,770 460,785 456,803 480,802",
  "478,750 488,775 488,800",
  "403,790 435,806 456,803",
];

const districts: [string, number, number, number, number, number][] = [
  ["黄陂区", 577, 542, 577, 511, 5], ["新洲区", 788, 695, 788, 664, 6], ["东西湖区", 296, 765, 295, 736, 2],
  ["江汉区", 486, 822, 486, 792, 3.5], ["江岸区", 507, 822, 507, 792, 4], ["硚口区", 484, 848, 484, 818, 1],
  ["武昌区", 517, 867, 517, 837, 2], ["洪山区", 650, 867, 650, 837, 5], ["蔡甸区", 295, 1010, 295, 980, 4],
  ["江夏区", 521, 1165, 521, 1130, 10],
];

function CityMap() {
  return (
    <Chart width="347" height="553" viewBox="893 413 347 553">
      <g transform="translate(860 460) scale(.33333)" strokeWidth="3" strokeLinejoin="round">
        <polygon points={cityOutline} fill="#2392a7" stroke="#2a7c9f" />
        {borders.map((b) => (
          <polyline key={b} points={b} fill="none" stroke="#25649a" />
        ))}
      </g>
      {districts.map(([name, x, y, px, py, r]) => (
        <g key={name}>
          <circle cx={860 + px / 3} cy={460 + py / 3} r={r / 3} fill="#d6c412" />
          <Label x={860 + x / 3} y={460 + y / 3} dy=".36em" textAnchor="middle" $s={9.8} $c="#d5d0e6">{name}</Label>
        </g>
      ))}
    </Chart>
  );
}

const table: [string, string, string][] = [
  ["江岸区", "3740231", "47.96%"], ["硚口区", "1345796", "17.26%"], ["武昌区", "760174", "9.75%"],
  ["江夏区", "462175", "5.93%"], ["青山区", "265030", "3.40%"], ["黄陂区", "241513", "3.10%"],
  ["东西湖区", "240279", "3.08%"], ["蔡甸区", "197800", "2.54%"], ["汉南区", "173374", "2.22%"],
  ["东湖高新区", "132962", "1.71%"], ["江汉区", "96042", "1.23%"], ["洪山区", "93473", "1.20%"],
  ["新洲区", "25503", "0.33%"], ["汉阳区", "21685", "0.28%"], ["经济开发区", "1416", "0.02%"],
  ["东湖风景区", "1127", "0.01%"],
];

function PanelDecor() {
  return (
    <PanelArt width="1114" height="553" viewBox="403 413 1114 553">
      <path d="M403 427L423 410.500H499L508.500 421H482L478 416H427L410 429V473.500L416 477V498.500L403 490.500Z" fill="#d3cfde" />
      <g fill={CYAN}>
        <path d="M403 532H409.500V542L403 538Z" />
        {Array.from({ length: 12 }, (_, i) => (
          <path key={i} d={`M403 ${541 + i * 8.8}l6.500 4v6l-6.500 -4z`} />
        ))}
        <path d="M403 647L409.500 651V682.500L403 679Z" />
        <path d="M1326 413.500H1336L1332 418H1326Z" />
        {Array.from({ length: 13 }, (_, i) => (
          <path key={i} d={`M${1340.5 + i * 9.85} 413.500h6l-4.500 4.500h-6z`} />
        ))}
        <path d="M1469 413.500H1507L1502 418H1464Z" />
      </g>
      <path d="M1261 967L1354 879L1447 967Z" fill={BG} />
      <path d="M404.500 878V966H1262L1354 879L1446.500 966H1516" fill="none" stroke={CYAN} strokeWidth="2" />
      <path d="M404.500 878V967M1515.500 878V967" stroke={CYAN} strokeWidth="3" />
      <path d="M1259 974.500L1354.500 885L1449.500 974.500Z" fill={BLUE} />
    </PanelArt>
  );
}

function StatCard({ title, total, digits, color, line }: { title: string; total: string; digits: string; color: string; line: number }) {
  return (
    <Stat>
      <StatTitle>{title}</StatTitle>
      <span>累计总数</span>
      <StatValue>{total}</StatValue>
      <span>今日增量</span>
      <Digits $bg={color} $line={line}>
        {digits.split("").map((d, i) => (
          <Digit key={i}>{d}</Digit>
        ))}
      </Digits>
    </Stat>
  );
}

function Centre() {
  return (
    <Column>
      <SectionTitle $left={20} $h={45}>实时数据2020年12月25日</SectionTitle>
      <StatsPanel>
        <StatCard title="电子健康卡发卡张数" total="9576109" digits="08596" color="#03b2d4" line={23} />
        <StatCard title="电子健康卡用卡次数" total="33266810" digits="27999" color="#dc7a11" line={24} />
        <StatCard title="电子健康卡月活跃用户数" total="398002" digits="12036" color={PINK} line={25} />
      </StatsPanel>
      <Switcher>
        <SwitchButton $active>电子健康卡总发卡数</SwitchButton>
        <SwitchButton>电子健康卡总用卡数</SwitchButton>
        <SwitchButton>电子健康卡当日发卡数</SwitchButton>
        <SwitchButton>电子健康卡当日用卡数</SwitchButton>
      </Switcher>
      <Panel>
        <PanelDecor />
        <PieColumn>
          <PieBlock>
            <PieTitle $accent="#e60012">二级以上医疗机构发放电子健康卡数<em>Top5</em></PieTitle>
            <PieRow>
              <Pie values={[2681926, 1009242, 542806, 459806, 301698]} cy={584.5} callouts={hospitalCallouts} size={9.4} box={[454, 351, 242]} />
              <Legend>
                {hospitals.map((h, i) => (
                  <LegendItem key={h} $h={22} $c={PIE[i]}>{h}</LegendItem>
                ))}
              </Legend>
            </PieRow>
          </PieBlock>
          <PieBlock>
            <PieTitle $accent="#f5a80c">基层医疗机构发放电子健康卡数<em>Top5</em></PieTitle>
            <PieRow>
              <Pie values={[29419, 28338, 27050, 20596, 17096]} cy={867.3} callouts={clinicCallouts} size={12.3} box={[737, 294, 229]} />
              <Legend>
                {clinics.map((c, i) => (
                  <LegendItem key={c} $h={34} $c={PIE[i]}>{c}</LegendItem>
                ))}
              </Legend>
            </PieRow>
          </PieBlock>
        </PieColumn>
        <MapColumn><CityMap /></MapColumn>
        <TableColumn>
          <TableTitle>各区发放电子健康卡数</TableTitle>
          <TableRow $head><span>名称</span><span>发卡数</span><span>发卡比例</span></TableRow>
          {table.map((r) => (
            <TableRow key={r[0]}><span>{r[0]}</span><span>{r[1]}</span><span>{r[2]}</span></TableRow>
          ))}
        </TableColumn>
      </Panel>
    </Column>
  );
}

/* ---------- footer ---------- */

function qrModules() {
  const n = 33;
  const cells: [number, number][] = [];
  let seed = 20201225;
  for (let y = 0; y < n; y++) {
    for (let x = 0; x < n; x++) {
      seed = (seed * 1103515245 + 12345) % 2147483648;
      const inFinder = (x < 8 && y < 8) || (x > n - 9 && y < 8) || (x < 8 && y > n - 9);
      if (!inFinder && (seed >> 12) % 2 === 0) cells.push([x, y]);
    }
  }
  return cells;
}

function Qr() {
  return (
    <QrCode width="60" height="60" viewBox="-0.500 -0.500 34 34" shapeRendering="crispEdges">
      <rect x="-1" y="-1" width="35" height="35" fill="#fff" />
      {qrModules().map(([x, y]) => (
        <rect key={`${x}-${y}`} x={x} y={y} width="1" height="1" fill="#111" />
      ))}
      {[[0, 0], [26, 0], [0, 26]].map(([x, y]) => (
        <g key={`${x}${y}`} fill="#111">
          <path d={`M${x} ${y}h7v7h-7zM${x + 1} ${y + 1}v5h5v-5z`} fillRule="evenodd" />
          <rect x={x + 2} y={y + 2} width="3" height="3" />
        </g>
      ))}
    </QrCode>
  );
}

export default function App() {
  return (
    <Window>
      <Global />
      <BrowserChrome />
      <Dashboard>
        <Particles />
        <TopBanner />
        <Main>
          <Column>
            <Section><SectionTitle $left={35}>健康武汉移动端注册数</SectionTitle><RegistrationChart /></Section>
            <Section><SectionTitle $left={35}>健康武汉每月线上支付笔数</SectionTitle><PaymentChart /></Section>
            <Section><SectionTitle $left={35}>健康武汉报告查询/预约挂号数</SectionTitle><VisitChart /></Section>
          </Column>
          <Centre />
          <Column>
            <Section>
              <SectionTitle $left={30}>基础数据</SectionTitle>
              <CardList>
                <InfoCard icon={<PeopleIcon />} title="武汉市常住人口数" value="1180万" />
                <InfoCard icon={<BankIcon />} title="武汉行政区划(含开发区)" value="15个" />
                <InfoCard icon={<HospitalIcon />} title="接入医疗机构数" value="医院40家,基卫机构185家" />
              </CardList>
            </Section>
            <Section><SectionTitle $left={30}>武汉健康档案数</SectionTitle><ArchiveChart /></Section>
            <Section><SectionTitle $left={30}>家庭医生每月签约数</SectionTitle><ContractChart /></Section>
          </Column>
        </Main>
        <Footer>
          <Publisher>武汉市卫生健康委员会发布<small>版本(1.8)</small></Publisher>
          <Partners>
            <svg width="18" height="20" viewBox="0 0 18 20" fill="none" stroke="#d5d6e4" strokeWidth="2">
              <path d="M1 2h3v10c0 6 9 6 9 0V2M6.500 2v12M10 2v12" />
            </svg>
            <Script>楚天云</Script>
            <Company $w={86}>湖北省楚天云有限公司<small>HuBei ChuTianCloud Co.,Ltd.</small></Company>
            <svg width="22" height="22" viewBox="0 0 22 22">
              <path d="M1 5l7-5v15l-7 5z" fill="#4b4fa0" /><path d="M8 5l8-5v17l-8 5z" fill="#16a35a" /><path d="M8 5l5-3v8l-5 4z" fill="#cfe9e0" />
            </svg>
            <Company $w={87}>万达信息股份有限公司<small>WONDERS INFORMATION CO.,LTD.</small></Company>
            <Support>联合技术支持</Support>
          </Partners>
          <Qr />
        </Footer>
      </Dashboard>
    </Window>
  );
}
